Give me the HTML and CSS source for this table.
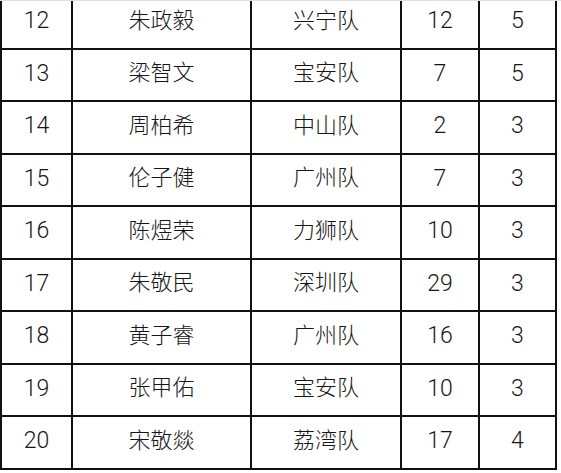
FILE: index.html
```html
<!DOCTYPE html>
<html lang="zh-CN">
<head>
<meta charset="utf-8">
<title>球员名单</title>
<link rel="stylesheet" href="styles.css">
</head>
<body>
<div class="frame">
  <div class="table">
    <div class="row"><div class="cell num">12</div><div class="cell">朱政毅</div><div class="cell">兴宁队</div><div class="cell num">12</div><div class="cell num">5</div></div>
    <div class="row"><div class="cell num">13</div><div class="cell">梁智文</div><div class="cell">宝安队</div><div class="cell num">7</div><div class="cell num">5</div></div>
    <div class="row"><div class="cell num">14</div><div class="cell">周柏希</div><div class="cell">中山队</div><div class="cell num">2</div><div class="cell num">3</div></div>
    <div class="row"><div class="cell num">15</div><div class="cell">伦子健</div><div class="cell">广州队</div><div class="cell num">7</div><div class="cell num">3</div></div>
    <div class="row"><div class="cell num">16</div><div class="cell">陈煜荣</div><div class="cell">力狮队</div><div class="cell num">10</div><div class="cell num">3</div></div>
    <div class="row"><div class="cell num">17</div><div class="cell">朱敬民</div><div class="cell">深圳队</div><div class="cell num">29</div><div class="cell num">3</div></div>
    <div class="row"><div class="cell num">18</div><div class="cell">黄子睿</div><div class="cell">广州队</div><div class="cell num">16</div><div class="cell num">3</div></div>
    <div class="row"><div class="cell num">19</div><div class="cell">张甲佑</div><div class="cell">宝安队</div><div class="cell num">10</div><div class="cell num">3</div></div>
    <div class="row"><div class="cell num">20</div><div class="cell">宋敬燚</div><div class="cell">荔湾队</div><div class="cell num">17</div><div class="cell num">4</div></div>
  </div>
</div>
</body>
</html>
```

FILE: styles.css
```css
html, body {
  margin: 0;
  padding: 0;
  background: #ffffff;
}

body {
  width: 561px;
  height: 473px;
  overflow: hidden;
  font-family: Roboto, "Noto Sans CJK SC", sans-serif;
  font-weight: 300;
  color: #161616;
}

.frame {
  border-top: 1px solid #e2e2e2;
  overflow: hidden;
  height: 472px;
}

.table {
  margin-top: -4px;
  width: 557px;
  border-left: 2px solid #111111;
  box-sizing: border-box;
}

.row {
  display: grid;
  grid-template-columns: 71px 179px 150px 78px 77px;
  height: 53px;
  border-bottom: 2px solid #111111;
  box-sizing: border-box;
}

.row:nth-child(even) {
  height: 52px;
}

.cell {
  display: flex;
  align-items: center;
  justify-content: center;
  border-right: 2px solid #111111;
  padding-bottom: 4px;
  box-sizing: border-box;
  font-size: 22px;
  line-height: 1;
}

.num {
  font-size: 23px;
}
```
